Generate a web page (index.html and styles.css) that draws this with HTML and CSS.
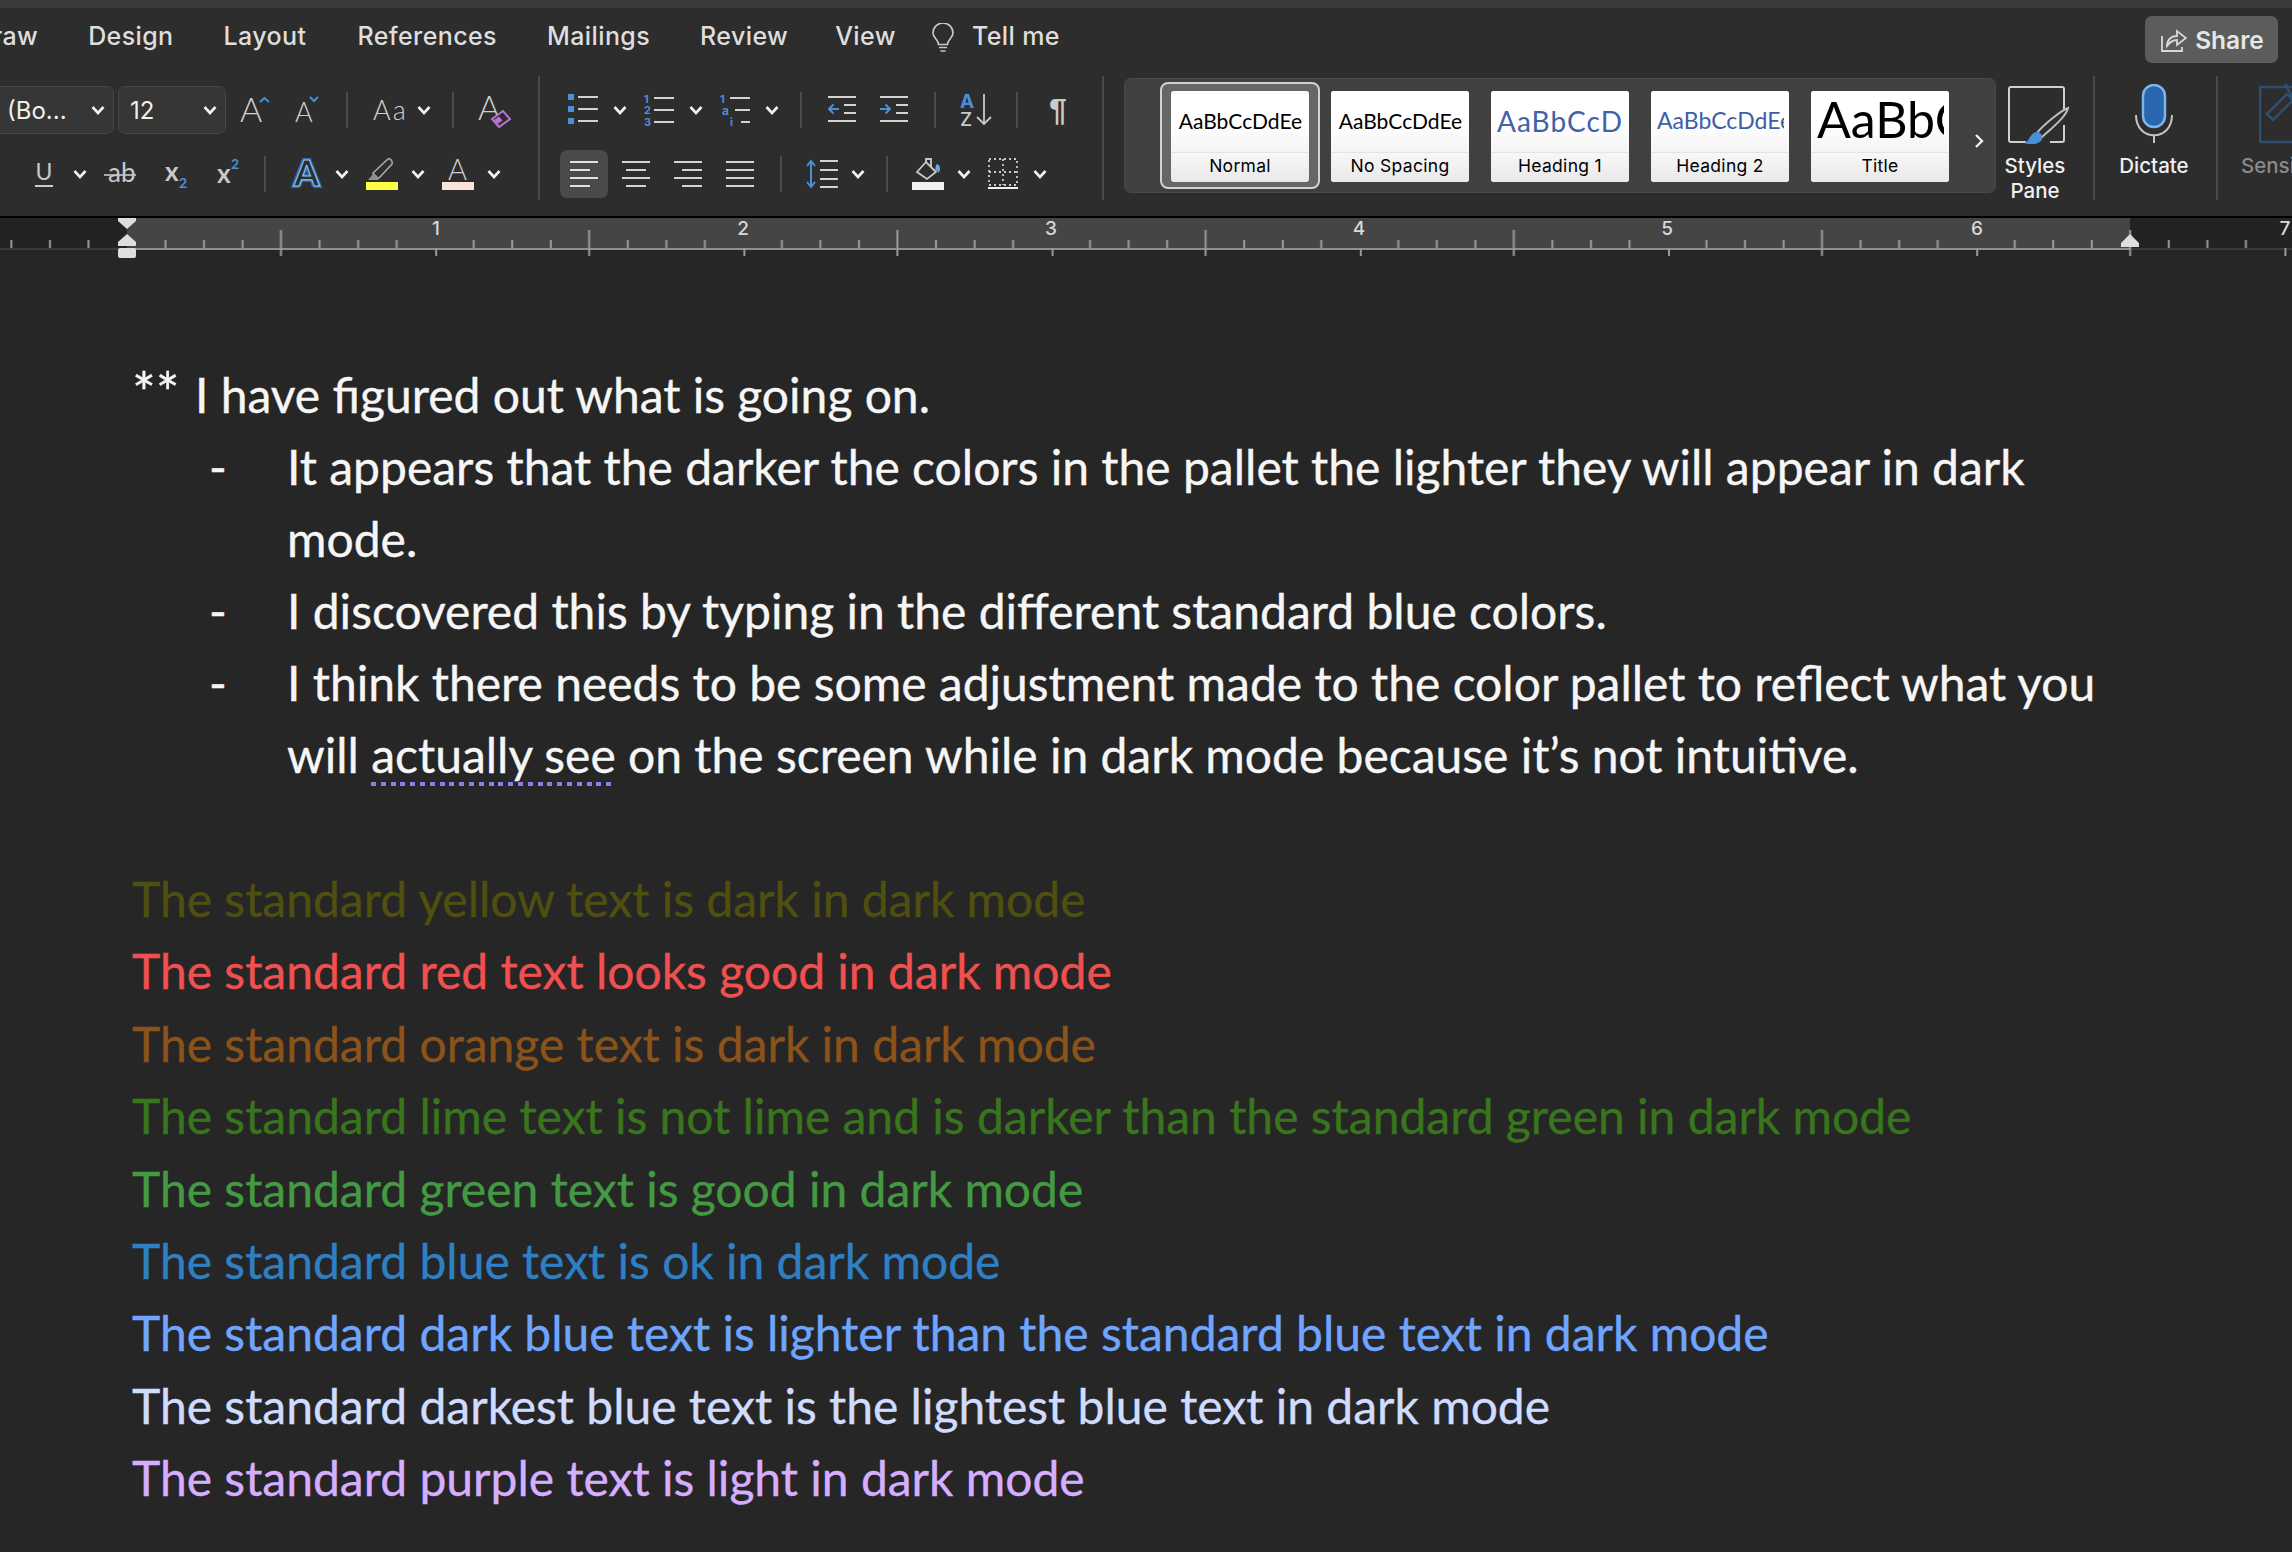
FILE: index.html
```html
<!DOCTYPE html>
<html lang="en">
<head>
<meta charset="utf-8">
<title>Word dark mode</title>
<link rel="stylesheet" href="styles.css">
</head>
<body>
<svg class="sprite" aria-hidden="true"><defs>
<symbol id="chev" viewBox="0 0 14 10"><path d="M1.5 2 7 8l5.5-6" fill="none" stroke="#f2f2f2" stroke-width="2.6"/></symbol>
</defs></svg>
<header class="ribbon">
<div class="titlebar"></div>
<div class="tabs">
<span class="tab tab-first">Draw</span><span class="tab">Design</span><span class="tab">Layout</span><span class="tab tab-refs">References</span><span class="tab">Mailings</span><span class="tab">Review</span><span class="tab tab-view">View</span>
<svg class="bulb" width="22" height="30" viewBox="0 0 22 30"><path d="M6.5 21.5C6.5 16.5 1 15 1 10a10 10 0 0 1 20 0c0 5-5.500 6.500-5.500 11.500zM7 24.500h8M8.500 28h5" fill="none" stroke="#c9c9c9" stroke-width="1.600"/></svg>
<span class="tab tab-tell">Tell me</span>
<button class="share"><svg width="26" height="25" viewBox="0 0 26 25"><path d="M1 9v15h20v-4M6 19c0-6 4-10 10-10V4l9 7-9 7v-5c-4 0-7 2-10 6z" fill="none" stroke="#d8d8d8" stroke-width="1.800"/></svg>Share</button>
</div>
<div class="toolbar">
<div class="group group-font">
<div class="row">
<div class="combo combo-font"><span>(Bo...</span><svg class="chev"><use href="#chev"/></svg></div>
<div class="combo combo-size ml-4"><span>12</span><svg class="chev"><use href="#chev"/></svg></div>
<svg class="ic ml-14" width="34" height="32" viewBox="0 0 34 32"><text class="t-light" x="0" y="28" font-size="34">A</text><path d="M20 8l4.500-4 4.500 4" fill="none" stroke="#4a90d9" stroke-width="2"/></svg>
<svg class="ic ml-21" width="28" height="32" viewBox="0 0 28 32"><text class="t-light" x="0" y="28" font-size="27">A</text><path d="M15 3l4 4 4-4" fill="none" stroke="#4a90d9" stroke-width="2"/></svg>
<i class="sep ml-23"></i>
<svg class="ic ml-25" width="32" height="30" viewBox="0 0 32 30"><text class="t-light" x="0" y="25" font-size="27" letter-spacing="2">Aa</text></svg>
<svg class="chev ml-12"><use href="#chev"/></svg>
<i class="sep ml-21"></i>
<svg class="ic ml-24" width="34" height="36" viewBox="0 0 34 36"><text class="t-light" x="0" y="28" font-size="34">A</text><path d="M14 27l11-8 7 8-11 8z" fill="#2d2d2d" stroke="#b675d6" stroke-width="2"/><path d="M16 28l5-3.500 3.500 4-5 3.500z" fill="#b675d6"/></svg>
</div>
<div class="row">
<svg class="ic ml-45" width="18" height="26" viewBox="0 0 18 26"><text class="t-reg" x="0.500" y="19" font-size="23">U</text><path d="M0 25h18" stroke="#c9c9c9" stroke-width="2"/></svg>
<svg class="chev ml-20"><use href="#chev"/></svg>
<svg class="ic ml-17" width="32" height="24" viewBox="0 0 32 24"><text class="t-reg" x="4" y="20" font-size="26">ab</text><path d="M0 13h32" stroke="#c9c9c9" stroke-width="1.600"/></svg>
<svg class="ic ml-29" width="22" height="30" viewBox="0 0 22 30"><text class="t-bold" x="0" y="22" font-size="26">x</text><text class="t-blue" x="14" y="29" font-size="14">2</text></svg>
<svg class="ic ml-30" width="22" height="30" viewBox="0 0 22 30"><text class="t-bold" x="0" y="24" font-size="26">x</text><text class="t-blue" x="14" y="10" font-size="14">2</text></svg>
<i class="sep ml-25"></i>
<svg class="ic ml-25" width="32" height="32" viewBox="0 0 32 32"><text class="t-outer" x="3" y="28" font-size="36">A</text><text class="t-inner" x="3" y="28" font-size="36">A</text></svg>
<svg class="chev ml-12"><use href="#chev"/></svg>
<svg class="ic ml-17" width="32" height="32" viewBox="0 0 32 32"><path d="M7 15 22 1c2-1 5 2 4 5L13 20H8z" fill="#2d2d2d" stroke="#a8a8a8" stroke-width="1.600"/><path d="M2 22l6-7 5 5-1 2z" fill="#8f8f8f"/><rect y="24" width="32" height="8" fill="#ffff44"/></svg>
<svg class="chev ml-13"><use href="#chev"/></svg>
<svg class="ic ml-17" width="32" height="32" viewBox="0 0 32 32"><text class="t-light" x="6" y="22" font-size="29">A</text><rect y="24" width="32" height="8" fill="#f8e4d8"/></svg>
<svg class="chev ml-13"><use href="#chev"/></svg>
</div>
</div>
<i class="sep-big"></i>
<div class="group group-para">
<div class="row">
<svg class="ic ml-28" width="30" height="32" viewBox="0 0 30 32"><path d="M0 0h6v6H0zM0 12h6v6H0zM0 24h6v6H0z" fill="#4a90d9"/><path d="M10 3h20M10 15h20M10 27h20" stroke="#d2d2d2" stroke-width="2"/></svg>
<svg class="chev ml-15"><use href="#chev"/></svg>
<svg class="ic ml-17" width="30" height="34" viewBox="0 0 30 34"><text class="t-num" x="0" y="10" font-size="11">1</text><text class="t-num" x="0" y="21" font-size="11">2</text><text class="t-num" x="0" y="33" font-size="11">3</text><path d="M10 5h20M10 17h20M10 29h20" stroke="#d2d2d2" stroke-width="2"/></svg>
<svg class="chev ml-15"><use href="#chev"/></svg>
<svg class="ic ml-17" width="30" height="34" viewBox="0 0 30 34"><text class="t-num" x="0" y="10" font-size="11">1</text><text class="t-num" x="2" y="22" font-size="12">a</text><text class="t-num" x="15" y="33" font-size="11" transform="translate(-5 0)">i</text><path d="M10 5h20M15 17h15M21 29h9" stroke="#d2d2d2" stroke-width="2"/></svg>
<svg class="chev ml-15"><use href="#chev"/></svg>
<i class="sep ml-21"></i>
<svg class="ic ml-26" width="28" height="30" viewBox="0 0 28 30"><path d="M0 2h28M16 10h12M16 18h12M0 26h28" stroke="#d2d2d2" stroke-width="2"/><path d="M11 14H1m4.500-4.500L1 14l4.500 4.500" fill="none" stroke="#4a90d9" stroke-width="2"/></svg>
<svg class="ic ml-24" width="28" height="30" viewBox="0 0 28 30"><path d="M0 2h28M16 10h12M16 18h12M0 26h28" stroke="#d2d2d2" stroke-width="2"/><path d="M0 14h10m-4.500-4.500L10 14l-4.500 4.500" fill="none" stroke="#4a90d9" stroke-width="2"/></svg>
<i class="sep ml-26"></i>
<svg class="ic ml-24" width="32" height="34" viewBox="0 0 32 34"><text class="t-azA" x="0" y="15" font-size="19">A</text><text class="t-azZ" x="0" y="33" font-size="19">Z</text><path d="M24 1v30m-7-7 7 7 7-7" fill="none" stroke="#c9c9c9" stroke-width="1.800"/></svg>
<i class="sep ml-24"></i>
<span class="pilcrow ml-30">¶</span>
</div>
<div class="row">
<div class="align-on ml-20"><svg width="28" height="26" viewBox="0 0 28 26"><path d="M0 1h28M0 9h20M0 17h28M0 25h20" stroke="#e0e0e0" stroke-width="2"/></svg></div>
<svg class="ic ml-14" width="28" height="26" viewBox="0 0 28 26"><path d="M0 1h28M4 9h20M0 17h28M4 25h20" stroke="#d2d2d2" stroke-width="2"/></svg>
<svg class="ic ml-24" width="28" height="26" viewBox="0 0 28 26"><path d="M0 1h28M8 9h20M0 17h28M8 25h20" stroke="#d2d2d2" stroke-width="2"/></svg>
<svg class="ic ml-24" width="28" height="26" viewBox="0 0 28 26"><path d="M0 1h28M0 9h28M0 17h28M0 25h28" stroke="#d2d2d2" stroke-width="2"/></svg>
<i class="sep ml-26"></i>
<svg class="ic ml-24" width="32" height="30" viewBox="0 0 32 30"><path d="M5 3v24M1 7l4-5 4 5M1 23l4 5 4-5" fill="none" stroke="#4a90d9" stroke-width="2"/><path d="M14 2h18M14 11h18M14 20h18M14 28h18" stroke="#d2d2d2" stroke-width="2"/></svg>
<svg class="chev ml-13"><use href="#chev"/></svg>
<i class="sep ml-21"></i>
<svg class="ic ml-24" width="32" height="32" viewBox="0 0 32 32"><path d="M5 14 14 4l10 10-9 7z" fill="none" stroke="#c9c9c9" stroke-width="1.800"/><path d="M14 4V1h5v8" fill="none" stroke="#c9c9c9" stroke-width="1.800"/><path d="M25 6c3 1 4 5 2 9-1-2-3-3-4-2 1-3 0-5 2-7z" fill="#6aa9e4"/><rect y="24" width="32" height="8" fill="#f0f0f0"/></svg>
<svg class="chev ml-13"><use href="#chev"/></svg>
<svg class="ic ml-17" width="30" height="32" viewBox="0 0 30 32"><path d="M1 1h28v26H1zM15 1v26M1 14h28" fill="none" stroke="#c9c9c9" stroke-width="1.800" stroke-dasharray="2 3"/><path d="M0 30h30" stroke="#f0f0f0" stroke-width="2"/></svg>
<svg class="chev ml-15"><use href="#chev"/></svg>
</div>
</div>
<i class="sep-big"></i>
<div class="gallery">
<div class="card card-on"><div class="sample s-normal">AaBbCcDdEe</div><div class="label">Normal</div></div>
<div class="card"><div class="sample s-normal">AaBbCcDdEe</div><div class="label">No Spacing</div></div>
<div class="card"><div class="sample s-h1">AaBbCcDdEe</div><div class="label">Heading 1</div></div>
<div class="card"><div class="sample s-h2">AaBbCcDdEe</div><div class="label">Heading 2</div></div>
<div class="card"><div class="sample s-title">AaBbCcDdEe</div><div class="label">Title</div></div>
<svg class="more" width="10" height="16" viewBox="0 0 10 16"><path d="M2 2l6 6-6 6" fill="none" stroke="#f0f0f0" stroke-width="2.400"/></svg>
</div>
<div class="big big-styles">
<svg width="70" height="60" viewBox="0 0 70 60"><path d="M26 58H11a2 2 0 0 1-2-2V5a2 2 0 0 1 2-2h51a2 2 0 0 1 2 2v24M64 41v15a2 2 0 0 1-2 2H50" fill="none" stroke="#cfcfcf" stroke-width="2"/><path d="M68 24C62 26 44 40 36 50l5 4C52 44 66 33 68 24z" fill="#2d2d2d" stroke="#bdbdbd" stroke-width="2"/><path d="M24 59c6-1 5-9 12-11 5-1 8 5 5 9-4 4-12 4-17 2z" fill="#4a90d9"/></svg>
<span>Styles<br>Pane</span>
</div>
<i class="sep-big ml-19"></i>
<div class="big big-dictate">
<svg width="40" height="60" viewBox="0 0 40 60"><rect x="9" y="1" width="22" height="42" rx="11" fill="#2a66b0" stroke="#7cb5ea" stroke-width="2.500"/><path d="M2 31c0 27 36 27 36 0M20 51v8" fill="none" stroke="#c4c4c4" stroke-width="2"/></svg>
<span>Dictate</span>
</div>
<i class="sep-big ml-3"></i>
<div class="big big-sens">
<svg width="60" height="60" viewBox="0 0 60 60"><path d="M34 3H1v55h33" fill="none" stroke="#2f4f70" stroke-width="2.500"/><path d="M8 30 28 10l6 6-20 20zM26 0l8-2 8 8-8 8z" fill="none" stroke="#2f4f70" stroke-width="2.500"/></svg>
<span>Sensitivity</span>
</div>
</div>
</header>
<div class="ruler">
<svg width="2292" height="40" viewBox="0 0 2292 40">
<defs><pattern id="inch" patternUnits="userSpaceOnUse" x="127" y="0" width="308.200" height="40"><path d="M1 30v8M38.500 22v8M77 22v8M115.600 22v8M154 12v26M192.600 22v8M231.200 22v8M269.700 22v8" stroke="#9a9a9a" stroke-width="2"/></pattern></defs>
<rect width="2292" height="31" fill="#232323"/>
<rect x="127" width="2003" height="31" fill="#454545"/>
<rect y="30" width="127" height="2" fill="#3a3a3a"/>
<rect x="2130" y="30" width="162" height="2" fill="#3a3a3a"/>
<rect x="127" y="30" width="2003" height="2" fill="#8f8f8f"/>
<rect width="2292" height="40" fill="url(#inch)"/>
<text class="rnum" x="436" y="17">1</text><text class="rnum" x="743" y="17">2</text><text class="rnum" x="1051" y="17">3</text><text class="rnum" x="1359" y="17">4</text><text class="rnum" x="1667" y="17">5</text><text class="rnum" x="1977" y="17">6</text><text class="rnum" x="2285" y="17">7</text>
<path d="M118 0h18v3l-9 8-9-8zM127 16l9 8v4h-18v-4zM2130 16l9 9v4h-18v-4z" fill="#dedede"/>
<rect x="118" y="30" width="18" height="10" rx="2" fill="#dedede"/>
</svg>
</div>
<main class="doc">
<p class="line"><span class="stars">**</span> I have figured out what is going on.</p>
<ul class="notes">
<li>It appears that the darker the colors in the pallet the lighter they will appear in dark mode.</li>
<li>I discovered this by typing in the different standard blue colors.</li>
<li>I think there needs to be some adjustment made to the color pallet to reflect what you will <span class="grammar">actually see</span> on the screen while in dark mode because it’s not intuitive.</li>
</ul>
<div class="colors">
<p class="c-yellow">The standard yellow text is dark in dark mode</p>
<p class="c-red">The standard red text looks good in dark mode</p>
<p class="c-orange">The standard orange text is dark in dark mode</p>
<p class="c-lime">The standard lime text is not lime and is darker than the standard green in dark mode</p>
<p class="c-green">The standard green text is good in dark mode</p>
<p class="c-blue">The standard blue text is ok in dark mode</p>
<p class="c-dblue">The standard dark blue text is lighter than the standard blue text in dark mode</p>
<p class="c-ddblue">The standard darkest blue text is the lightest blue text in dark mode</p>
<p class="c-purple">The standard purple text is light in dark mode</p>
</div>
</main>
</body>
</html>
```
FILE: styles.css
```css
* { box-sizing: border-box; }
html, body { margin: 0; padding: 0; }
body { width: 2292px; height: 1552px; overflow: hidden; background: #262626; font-family: "Lato", sans-serif; color: #f6f6f6; }
.sprite { position: absolute; width: 0; height: 0; }
.ribbon { background: #2d2d2d; height: 216px; }
.titlebar { height: 8px; background: #3b3b3b; }
.tabs { height: 68px; display: flex; align-items: flex-start; font-family: "Inter", sans-serif; }
.tab { font-size: 25px; letter-spacing: .4px; font-weight: 500; line-height: 30px; color: #dedede; margin-top: 13px; margin-left: 50px; white-space: nowrap; }
.tab-first { margin-left: -26px; }
.tab-refs { margin-left: 51px; }
.tab-view { margin-left: 47px; }
.bulb { margin: 15px 0 0 36px; flex: none; }
.tab-tell { margin-left: 18px; }
.share { margin: 8px 14px 0 auto; width: 133px; height: 47px; border: 0; border-radius: 7px; background: #5c5c5c; color: #e6e6e6; display: flex; align-items: center; justify-content: center; gap: 8px; font: 600 24.500px "Inter", sans-serif; padding: 0 0 0 2px; }
.toolbar { height: 140px; display: flex; align-items: flex-start; white-space: nowrap; overflow: hidden; }
.group { display: flex; flex-direction: column; gap: 16px; padding-top: 10px; flex: none; }
.group-font { width: 548px; margin-left: -10px; }
.group-para { width: 562px; }
.row { display: flex; align-items: center; height: 48px; }
.ic { flex: none; display: block; }
.chev { flex: none; width: 14px; height: 10px; }
.sep { flex: none; width: 2px; height: 36px; background: #4c4c4c; }
.sep-big { flex: none; width: 2px; height: 124px; background: #4a4a4a; }
.combo { flex: none; height: 48px; border: 1px solid #454545; border-radius: 7px; background: #363636; display: flex; align-items: center; justify-content: space-between; font: 400 24px "Inter", sans-serif; color: #f0f0f0; }
.combo-font { width: 124px; padding: 0 8px 0 16px; }
.combo-size { width: 108px; padding: 0 8px 0 11px; }
.ml-3 { margin-left: 3px; } .ml-4 { margin-left: 4px; } .ml-12 { margin-left: 12px; } .ml-13 { margin-left: 13px; } .ml-14 { margin-left: 14px; } .ml-15 { margin-left: 15px; } .ml-17 { margin-left: 17px; } .ml-19 { margin-left: 19px; } .ml-20 { margin-left: 20px; } .ml-21 { margin-left: 21px; } .ml-23 { margin-left: 23px; } .ml-24 { margin-left: 24px; } .ml-25 { margin-left: 25px; } .ml-26 { margin-left: 26px; } .ml-28 { margin-left: 28px; } .ml-29 { margin-left: 29px; } .ml-30 { margin-left: 30px; } .ml-45 { margin-left: 45px; }
text { font-family: "Lato", sans-serif; }
.t-light { font-weight: 300; fill: #d0d0d0; }
.t-reg { font-weight: 400; fill: #c9c9c9; }
.t-bold { font-weight: 700; fill: #c9c9c9; }
.t-blue { font-weight: 700; fill: #4a90d9; }
.t-num { font-weight: 700; fill: #4a90d9; font-family: "Inter", sans-serif; }
.t-outer { font-weight: 900; fill: #2d2d2d; stroke: #2a6cb8; stroke-width: 4px; }
.t-inner { font-weight: 900; fill: #2d2d2d; stroke: #8ac0f0; stroke-width: 1.200px; }
.t-azA { font-weight: 700; fill: #4a90d9; font-family: "Inter", sans-serif; }
.t-azZ { font-weight: 500; fill: #c9c9c9; font-family: "Inter", sans-serif; }
.pilcrow { flex: none; width: 20px; font: 700 32px "Liberation Sans", sans-serif; color: #c9c9c9; text-align: center; }
.align-on { flex: none; width: 48px; height: 48px; border-radius: 7px; background: #4a4a4a; display: flex; align-items: center; justify-content: center; }
.gallery { flex: none; position: relative; width: 872px; height: 115px; margin: 2px 0 0 20px; padding: 12px 0 0 46px; background: #404040; border: 1px solid #4b4b4b; border-radius: 7px; display: flex; align-items: flex-start; gap: 22px; }
.card { flex: none; position: relative; width: 138px; height: 91px; border-radius: 3px; overflow: hidden; background: #fff; display: flex; flex-direction: column; color: #000; }
.card-on { overflow: visible; }
.card-on::before { content: ""; position: absolute; inset: -9px -11px -7px -11px; border: 2px solid #d2d2d2; border-radius: 8px; background: #666; z-index: 0; }
.card-on > * { position: relative; z-index: 1; }
.sample { height: 61px; flex: none; overflow: clip; overflow-clip-margin: content-box; padding: 0 5px 0 6px; background: linear-gradient(#fff 50%, #f4f4f4); white-space: nowrap; font-family: "Lato", sans-serif; }
.card-on .sample { border-radius: 3px 3px 0 0; }
.card-on .label { border-radius: 0 0 3px 3px; }
.s-normal { font-size: 21px; line-height: 60px; text-align: center; }
.s-h1 { font-size: 28px; font-weight: 400; letter-spacing: 1px; line-height: 60px; color: #3f62a8; }
.s-h2 { font-size: 23px; font-weight: 400; line-height: 58px; color: #3c5fa6; }
.s-title { font-size: 50px; line-height: 56px; }
.label { height: 30px; flex: none; background: linear-gradient(#f7f7f7, #e9e9e9); border-top: 1px solid #e4e4e4; text-align: center; font: 400 17.500px/26px "Inter", sans-serif; letter-spacing: .3px; }
.more { position: relative; flex: none; margin: 42px 0 0 3px; }
.big { flex: none; display: flex; flex-direction: column; align-items: center; padding-top: 8px; font: 500 20.500px/25px "Inter", sans-serif; color: #f0f0f0; text-align: center; }
.big svg { display: block; margin-bottom: 9px; }
.big-styles { width: 78px; }
.big-dictate { width: 118px; }
.big-sens { width: 90px; margin-left: 23px; align-items: flex-start; color: #8a8a8a; }
.big-sens svg { margin-left: 18px; }
.ruler { border-top: 2px solid #000; height: 42px; }
.ruler svg { display: block; }
.rnum { font: 500 19px "Inter", sans-serif; fill: #d8d8d8; text-anchor: middle; }
.doc { padding: 101px 182px 0 132px; font-size: 48px; line-height: 72px; -webkit-text-stroke: .35px currentColor; }
.doc p, .notes { margin: 0; padding: 0; }
.line { padding-left: 2px; }
.stars { font-size: 56px; line-height: 0; margin-right: 3px; }
.doc .notes { list-style: none; padding-left: 155px; }
.notes li { position: relative; }
.notes li::before { content: "-"; position: absolute; left: -78px; }
.grammar { padding-bottom: 3px; background: repeating-linear-gradient(90deg, #8a80f0 0 5px, transparent 5px 9.8px) left bottom / 100% 4px no-repeat; }
.colors { margin-top: 72px; line-height: 72.4px; }
.c-yellow { color: #4f4f10; } .c-red { color: #f05050; } .c-orange { color: #8b5319; } .c-lime { color: #38751c; } .c-green { color: #439a43; } .c-blue { color: #2f7fc4; } .c-dblue { color: #6fa5ff; } .c-ddblue { color: #d0dcff; } .c-purple { color: #d6aeff; }
```
